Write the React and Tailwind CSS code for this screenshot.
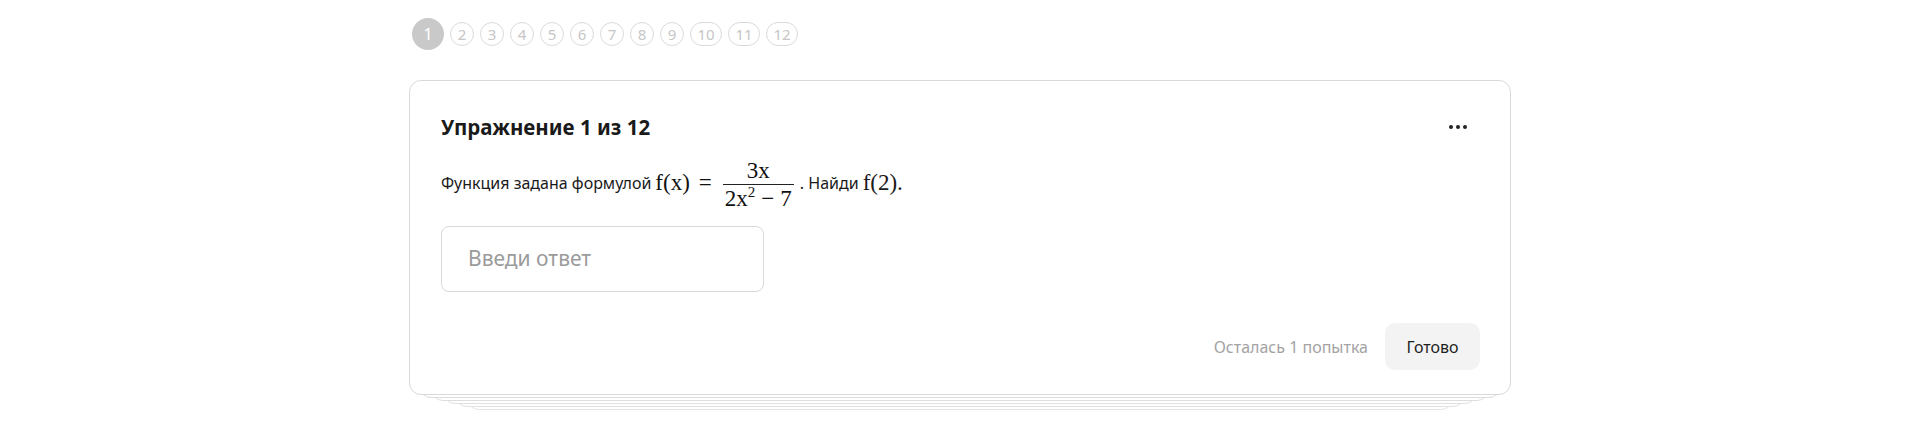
import React from "react";

const sans = { fontFamily: '"Noto Sans", "Open Sans", sans-serif' };
const serif = { fontFamily: '"Liberation Serif", "DejaVu Serif", serif' };

function Pager() {
  const items = [2, 3, 4, 5, 6, 7, 8, 9, 10, 11, 12];
  return (
    <div className="flex items-center gap-[6px] pl-[3px] h-[32px]">
      <div className="w-[32px] h-[32px] rounded-full bg-[#c9c9c9] text-white flex items-center justify-center text-[16px]">
        1
      </div>
      {items.map((n) => (
        <div
          key={n}
          className={
            (n >= 10 ? "w-[32px]" : "w-[24px]") +
            " h-[24px] rounded-full border border-[#dadada] text-[#c6c6c6] flex items-center justify-center text-[15px] leading-none"
          }
        >
          {n}
        </div>
      ))}
    </div>
  );
}

function Formula() {
  return (
    <span className="inline-flex items-center text-[23px] text-[#111] mx-[4px]" style={serif}>
      <span>f(x)</span>
      <span className="mx-[9px]">=</span>
      <span className="inline-flex flex-col items-center mx-[2px] relative top-[1px]">
        <span className="px-[3px] leading-[27px]">3x</span>
        <span className="w-full h-[1px] bg-[#222]"></span>
        <span className="px-[2px] leading-[27px]">
          2x<sup className="text-[15px] relative top-[-9px]">2</sup>
          <span className="mx-[6px]">−</span>7
        </span>
      </span>
    </span>
  );
}

export default function App() {
  return (
    <div className="min-h-screen bg-white" style={sans}>
      <div className="w-[1102px] mx-auto pt-[18px]">
        <Pager />
        <div className="relative mt-[30px]">
          <div className="absolute left-[58px] right-[58px] top-0 bottom-[-15px] rounded-[12px] border border-[#e4e4e4] bg-white"></div>
          <div className="absolute left-[46px] right-[46px] top-0 bottom-[-12px] rounded-[12px] border border-[#e2e2e2] bg-white"></div>
          <div className="absolute left-[34px] right-[34px] top-0 bottom-[-9px] rounded-[12px] border border-[#e0e0e0] bg-white"></div>
          <div className="absolute left-[22px] right-[22px] top-0 bottom-[-6px] rounded-[12px] border border-[#dedede] bg-white"></div>
          <div className="absolute left-[10px] right-[10px] top-0 bottom-[-3px] rounded-[12px] border border-[#dcdcdc] bg-white"></div>
          <div className="relative rounded-[12px] border border-[#d9d9d9] bg-white h-[315px] pl-[31px] pr-[30px] pt-[30px] flex flex-col">
            <div className="flex items-center justify-between">
              <h1 className="text-[20.5px] leading-[32px] font-bold text-[#1a1a1a]">Упражнение 1 из 12</h1>
              <button className="w-[44px] h-[32px] flex items-center justify-center gap-[3px]">
                <span className="w-[4px] h-[4px] rounded-full bg-[#222]"></span>
                <span className="w-[4px] h-[4px] rounded-full bg-[#222]"></span>
                <span className="w-[4px] h-[4px] rounded-full bg-[#222]"></span>
              </button>
            </div>
            <div className="mt-[14px] flex items-center text-[16px] text-[#1a1a1a] h-[52px] whitespace-nowrap">
              <span>Функция задана формулой</span>
              <Formula />
              <span>. Найди</span>
              <span className="text-[23px] ml-[4px]" style={serif}>f(2).</span>
            </div>
            <div className="mt-[17px] w-[323px] h-[66px] rounded-[8px] border border-[#d9d9d9] flex items-center pl-[26px] text-[21px] text-[#9b9b9b]">
              Введи ответ
            </div>
            <div className="mt-auto mb-[24px] flex items-center justify-end gap-[17px]">
              <span className="text-[16px] text-[#a3a3a3]">Осталась 1 попытка</span>
              <button className="w-[95px] h-[47px] rounded-[10px] bg-[#f3f3f3] text-[16px] text-[#1f1f1f]">Готово</button>
            </div>
          </div>
        </div>
      </div>
    </div>
  );
}
